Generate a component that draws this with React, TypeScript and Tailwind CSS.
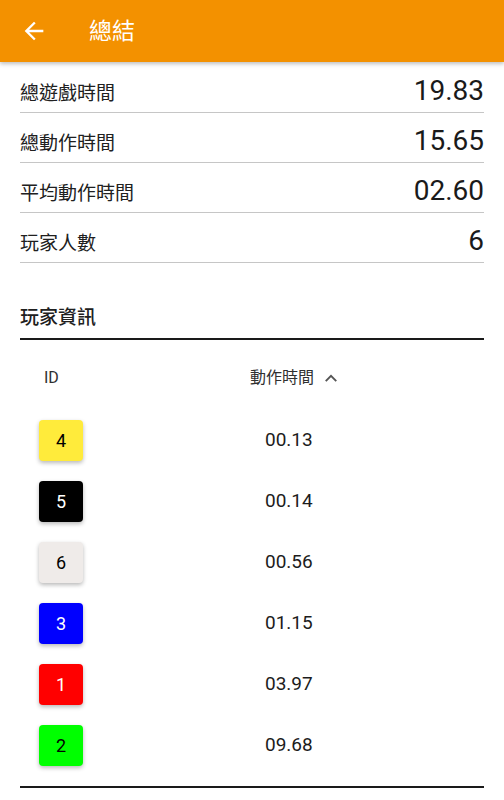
import React from 'react';

interface SummaryItem {
  label: string;
  value: string;
}

interface PlayerRow {
  id: number;
  time: string;
  bg: string;
  fg: string;
}

const summary: SummaryItem[] = [
  { label: '總遊戲時間', value: '19.83' },
  { label: '總動作時間', value: '15.65' },
  { label: '平均動作時間', value: '02.60' },
  { label: '玩家人數', value: '6' },
];

const players: PlayerRow[] = [
  { id: 4, time: '00.13', bg: 'bg-[#ffeb3b]', fg: 'text-black' },
  { id: 5, time: '00.14', bg: 'bg-black', fg: 'text-white' },
  { id: 6, time: '00.56', bg: 'bg-[#efebe9]', fg: 'text-black' },
  { id: 3, time: '01.15', bg: 'bg-[#0000ff]', fg: 'text-white' },
  { id: 1, time: '03.97', bg: 'bg-[#ff0000]', fg: 'text-white' },
  { id: 2, time: '09.68', bg: 'bg-[#00ff00]', fg: 'text-black' },
];

const font = "font-['Roboto','Noto_Sans_CJK_TC',sans-serif]";

const App: React.FC = () => {
  return (
    <div className={`${font} w-[504px] min-h-[800px] bg-white text-[#1c1c1c]`}>
      <header className="h-[62px] bg-[#f39100] flex items-center shadow-[0_2px_4px_rgba(0,0,0,0.25)] relative">
        <svg viewBox="0 0 24 24" className="w-7 h-7 ml-[20px] fill-white">
          <path d="M20 11H7.83l5.59-5.59L12 4l-8 8 8 8 1.41-1.41L7.83 13H20v-2z" />
        </svg>
        <h1 className="ml-[41px] text-[23px] leading-none text-white">總結</h1>
      </header>

      <main className="px-5">
        <div className="pt-[1px]">
          {summary.map((item) => (
            <div
              key={item.label}
              className="h-[50px] border-b border-[#c6c6c6] flex items-baseline justify-between pt-[14px]"
            >
              <span className="text-[19px] leading-[28px] text-[#202020]">{item.label}</span>
              <span className="text-[28px] leading-[28px] text-[#1a1a1a]">{item.value}</span>
            </div>
          ))}
        </div>

        <h2 className="mt-[41px] text-[19px] leading-[28px] font-medium text-[#202020]">玩家資訊</h2>
        <div className="mt-[6px] h-[2px] bg-[#1a1a1a]" />

        <div className="grid grid-cols-[230px_1fr] h-[70px] pt-[6px] items-center text-[16px] text-[#303030]">
          <span className="pl-[24px]">ID</span>
          <span className="flex items-center">
            動作時間
            <svg viewBox="0 0 16 10" className="w-[14px] h-[9px] ml-[10px]">
              <polyline points="2,8 8,2 14,8" fill="none" stroke="#555" strokeWidth="2.2" />
            </svg>
          </span>
        </div>

        <div className="pb-[10px]">
          {players.map((p) => (
            <div key={p.id} className="grid grid-cols-[230px_1fr] h-[61px] items-center">
              <div className="pl-[19px]">
                <div
                  className={`w-[44px] h-[41px] rounded-[4px] flex items-center justify-center text-[18px] shadow-[0_2px_4px_rgba(0,0,0,0.28)] ${p.bg} ${p.fg}`}
                >
                  {p.id}
                </div>
              </div>
              <span className="pl-[15px] text-[19px] text-[#1c1c1c]">{p.time}</span>
            </div>
          ))}
        </div>
        <div className="h-[2px] bg-[#1a1a1a]" />
      </main>
    </div>
  );
};

export default App;
